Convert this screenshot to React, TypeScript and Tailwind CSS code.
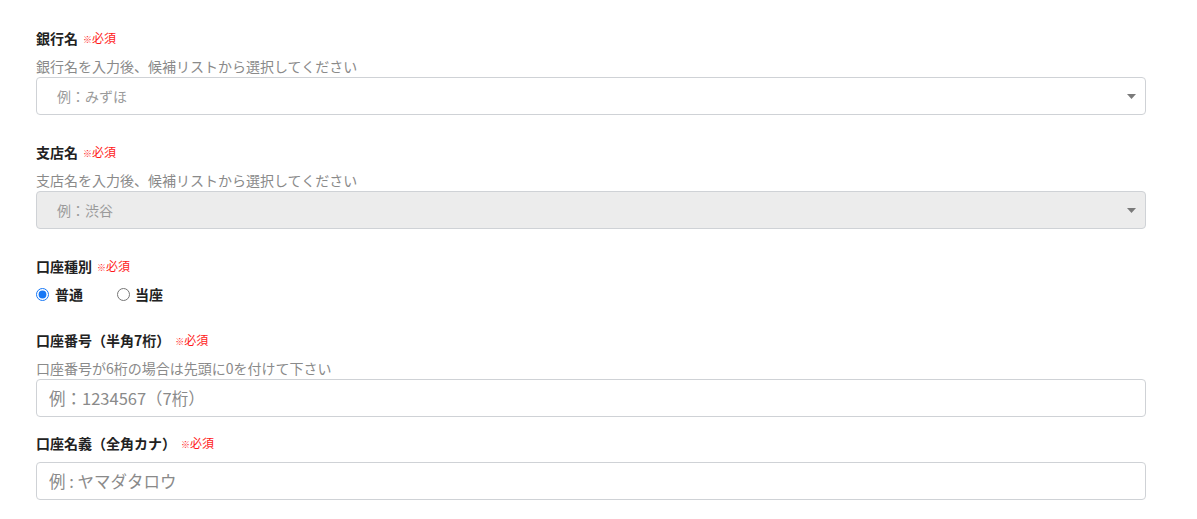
import React from 'react';

const font = { fontFamily: '"Noto Sans CJK JP", "Noto Sans", sans-serif' };

const Required = () => (
  <span className="text-[12px] font-normal text-[#ff1a1a] ml-[5px]">
    <span className="text-[9px]">※</span>必須
  </span>
);

const Label: React.FC<{ text: string }> = ({ text }) => (
  <div className="h-5 flex items-center text-[14px] font-bold text-[#222]">
    <span>{text}</span>
    <Required />
  </div>
);

const Hint: React.FC<{ text: string }> = ({ text }) => (
  <div className="h-5 flex items-center text-[14px] text-[#8a8a8a]">{text}</div>
);

const Select: React.FC<{ placeholder: string; disabled?: boolean }> = ({ placeholder, disabled }) => (
  <div
    className={`mt-px h-[38px] flex items-center justify-between rounded-[4px] border border-[#cfd2d6] pl-[20px] pr-[9px] ${
      disabled ? 'bg-[#ececec]' : 'bg-white'
    }`}
  >
    <span className="text-[14px] text-[#9a9a9a]">{placeholder}</span>
    <svg width="9" height="5" viewBox="0 0 9 5">
      <path d="M0 0 H9 L4.5 5 Z" fill="#7a7a7a" />
    </svg>
  </div>
);

const TextInput: React.FC<{ placeholder: string }> = ({ placeholder }) => (
  <input
    className="block w-full h-[38px] rounded-[4px] border border-[#cfd2d6] px-[12px] text-[16.5px] text-[#333] placeholder:text-[#8a8a8a] outline-none"
    placeholder={placeholder}
    style={font}
  />
);

export default function App() {
  return (
    <div className="min-h-screen bg-white" style={font}>
      <div className="w-[1110px] ml-[36px] pt-[28px]">
        <Label text="銀行名" />
        <div className="mt-[8px]">
          <Hint text="銀行名を入力後、候補リストから選択してください" />
        </div>
        <Select placeholder="例：みずほ" />

        <div className="mt-[27px]">
          <Label text="支店名" />
        </div>
        <div className="mt-[8px]">
          <Hint text="支店名を入力後、候補リストから選択してください" />
        </div>
        <Select placeholder="例：渋谷" disabled />

        <div className="mt-[27px]">
          <Label text="口座種別" />
        </div>
        <div className="mt-[8px] h-5 flex items-center text-[14px] font-bold text-[#222]">
          <label className="flex items-center gap-[6px]">
            <input type="radio" name="kind" defaultChecked className="m-0 w-[13px] h-[13px] accent-[#1677f5]" />
            <span>普通</span>
          </label>
          <label className="flex items-center gap-[5px] ml-[34px]">
            <input type="radio" name="kind" className="m-0 w-[13px] h-[13px]" />
            <span>当座</span>
          </label>
        </div>

        <div className="mt-[26px]">
          <Label text="口座番号（半角7桁）" />
        </div>
        <div className="mt-[8px] mb-px">
          <Hint text="口座番号が6桁の場合は先頭に0を付けて下さい" />
        </div>
        <TextInput placeholder="例：1234567（7桁）" />

        <div className="mt-[16px]">
          <Label text="口座名義（全角カナ）" />
        </div>
        <div className="mt-[9px]">
          <TextInput placeholder="例 : ヤマダタロウ" />
        </div>
      </div>
    </div>
  );
}
